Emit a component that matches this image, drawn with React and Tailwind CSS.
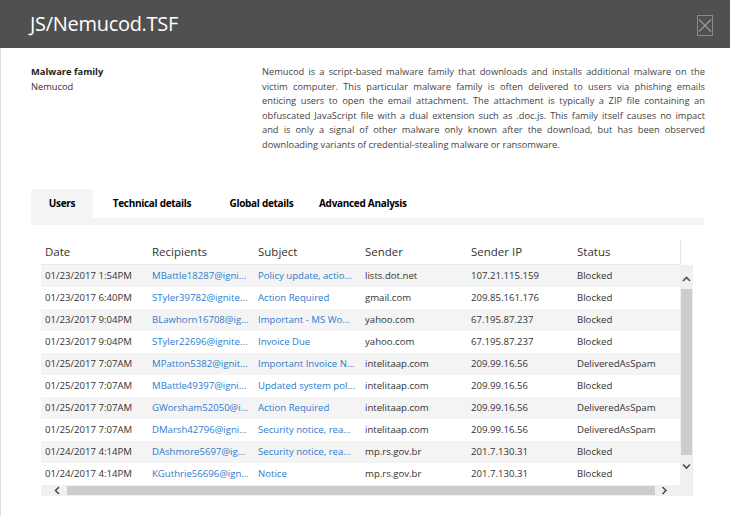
import React from "react";

const rows = [
  ["01/23/2017 1:54PM", "MBattle18287@igni...", "Policy update, actio...", "lists.dot.net", "107.21.115.159", "Blocked"],
  ["01/23/2017 6:40PM", "STyler39782@ignite...", "Action Required", "gmail.com", "209.85.161.176", "Blocked"],
  ["01/23/2017 9:04PM", "BLawhorn16708@ig...", "Important - MS Wo...", "yahoo.com", "67.195.87.237", "Blocked"],
  ["01/23/2017 9:04PM", "STyler22696@ignite...", "Invoice Due", "yahoo.com", "67.195.87.237", "Blocked"],
  ["01/25/2017 7:07AM", "MPatton5382@ignit...", "Important Invoice N...", "intelitaap.com", "209.99.16.56", "DeliveredAsSpam"],
  ["01/25/2017 7:07AM", "MBattle49397@igni...", "Updated system pol...", "intelitaap.com", "209.99.16.56", "Blocked"],
  ["01/25/2017 7:07AM", "GWorsham52050@i...", "Action Required", "intelitaap.com", "209.99.16.56", "DeliveredAsSpam"],
  ["01/25/2017 7:07AM", "DMarsh42796@igni...", "Security notice, rea...", "intelitaap.com", "209.99.16.56", "DeliveredAsSpam"],
  ["01/24/2017 4:14PM", "DAshmore5697@ig...", "Security notice, rea...", "mp.rs.gov.br", "201.7.130.31", "Blocked"],
  ["01/24/2017 4:14PM", "KGuthrie56696@ign...", "Notice", "mp.rs.gov.br", "201.7.130.31", "Blocked"],
];

const description = [
  "Nemucod is a script-based malware family that downloads and installs additional malware on the",
  "victim computer. This particular malware family is often delivered to users via phishing emails",
  "enticing users to open the email attachment. The attachment is typically a ZIP file containing an",
  "obfuscated JavaScript file with a dual extension such as .doc.js. This family itself causes no impact",
  "and is only a signal of other malware only known after the download, but has been observed",
];

const headers = ["Date", "Recipients", "Subject", "Sender", "Sender IP", "Status"];
const cols = "grid grid-cols-[107px_106px_107px_106px_106px_107px]";

function Chevron({ dir }) {
  const pts = {
    up: "1,5 4.5,1.5 8,5",
    down: "1,1.5 4.5,5 8,1.5",
    left: "5,1 1.5,4.5 5,8",
    right: "1.5,1 5,4.5 1.5,8",
  }[dir];
  const horiz = dir === "left" || dir === "right";
  return (
    <svg width={horiz ? 7 : 9} height={horiz ? 9 : 7} viewBox={horiz ? "0 0 7 9" : "0 0 9 7"}>
      <polyline points={pts} fill="none" stroke="#505050" strokeWidth="1.6" />
    </svg>
  );
}

export default function App() {
  return (
    <div className="w-[730px] h-[516px] bg-white overflow-hidden text-[#333] font-['Segoe_UI','Open_Sans',sans-serif]">
      <div className="h-[48px] bg-[#505050] flex items-center justify-between pl-[30px] pr-[17px]">
        <h1 className="text-[20px] text-white leading-none tracking-[-0.3px]">JS/Nemucod.TSF</h1>
        <button className="mt-[2px]">
          <svg width="16" height="21" viewBox="0 0 16 21">
            <rect x="0.5" y="0.5" width="15" height="20" fill="none" stroke="#8a8a8a" />
            <line x1="2" y1="4.5" x2="14" y2="16.5" stroke="#9a9a9a" strokeWidth="1.2" />
            <line x1="14" y1="4.5" x2="2" y2="16.5" stroke="#9a9a9a" strokeWidth="1.2" />
          </svg>
        </button>
      </div>

      <div className="h-[468px] border-l border-[#dcdcdc]">
        <div className="flex pt-[17px] pl-[30px] text-[9.3px] leading-[14.6px]">
          <div className="w-[231px]">
            <div className="font-bold text-[#222]">Malware family</div>
            <div>Nemucod</div>
          </div>
          <div className="w-[443px] text-[#444]">
            {description.map((line) => (
              <div key={line} className="whitespace-nowrap text-justify [text-align-last:justify]">
                {line}
              </div>
            ))}
            <div>downloading variants of credential-stealing malware or ransomware.</div>
          </div>
        </div>

        <div className="ml-[30px] w-[673px] mt-[36px]">
          <div className="flex h-[29px] text-[10px] font-bold text-black tracking-[-0.3px]">
            <div className="w-[62px] bg-[#f4f4f4] flex items-center justify-center">Users</div>
            <div className="w-[118px] flex items-center justify-center">Technical details</div>
            <div className="w-[101px] flex items-center justify-center">Global details</div>
            <div className="px-[7px] flex items-center">Advanced Analysis</div>
          </div>
          <div className="h-[7px] bg-[#f4f4f4]" />
        </div>

        <div className="ml-[40px] w-[652px] mt-[14px]">
          <div className="flex">
            <div className={`${cols} w-[639px] h-[26px] items-center border-b border-[#e6e6e6] text-[11.5px] text-[#333]`}>
              {headers.map((h) => (
                <div key={h} className="pl-[4px] pt-[1px]">{h}</div>
              ))}
            </div>
            <div className="w-[13px] border-l border-[#e6e6e6]" />
          </div>

          <div className="flex">
            <div className="w-[639px] text-[9.6px]">
              {rows.map((r, i) => (
                <div key={i} className={`${cols} h-[22px] items-center ${i % 2 === 0 ? "bg-[#f4f4f4]" : "bg-white"}`}>
                  {r.map((c, j) => (
                    <div
                      key={j}
                      className={`pl-[4px] pt-[1px] whitespace-nowrap overflow-hidden ${j === 1 || j === 2 ? "text-[#2f7bcb]" : "text-[#333]"}`}
                    >
                      {c}
                    </div>
                  ))}
                </div>
              ))}
            </div>
            <div className="w-[13px] bg-[#f0f0f0] flex flex-col items-center">
              <div className="h-[24px] flex items-center justify-center pt-[6px]">
                <Chevron dir="up" />
              </div>
              <div className="w-[11px] h-[166px] bg-[#cdcdcd]" />
              <div className="pt-[8px]">
                <Chevron dir="down" />
              </div>
            </div>
          </div>

          <div className="h-[11px] bg-[#f0f0f0] flex items-center">
            <div className="w-[26px] flex items-center pl-[13px]">
              <Chevron dir="left" />
            </div>
            <div className="w-[588px] h-[9px] bg-[#cdcdcd]" />
            <div className="pl-[6px] flex items-center">
              <Chevron dir="right" />
            </div>
          </div>
        </div>
      </div>
    </div>
  );
}
